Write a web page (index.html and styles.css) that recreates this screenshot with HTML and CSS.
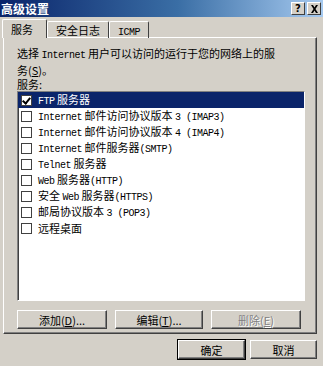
FILE: index.html
```html
<!DOCTYPE html>
<html lang="zh-CN">
<head>
  <meta charset="UTF-8" />
  <title>高级设置</title>
  <link rel="stylesheet" href="styles.css">
</head>
<body>
  <div class="janela">
    <div class="titulo">
      <span class="titulo-texto">高级设置</span>
      <div class="titulo-botoes">
        <span class="tb">?</span>
        <span class="tb">
          <svg width="9" height="8" viewBox="0 0 9 8"><path d="M1 0h2l1.5 2.5L6 0h2L5.5 4 8 8H6L4.5 5.5 3 8H1l2.5-4z" fill="#000"/></svg>
        </span>
      </div>
    </div>

    <div class="abas">
      <div class="aba ativa">服务</div>
      <div class="aba">安全日志</div>
      <div class="aba"><span class="en">ICMP</span></div>
    </div>

    <div class="painel">
      <p class="intro">选择 <span class="en">Internet</span> 用户可以访问的运行于您的网络上的服务(<u>S</u>)。</p>
      <p class="rotulo">服务:</p>

      <ul class="lista">
        <li class="sel"><span class="chk on"></span><span class="txt"><span class="en">FTP</span> 服务器</span></li>
        <li><span class="chk"></span><span class="txt"><span class="en">Internet</span> 邮件访问协议版本 <span class="en">3 (IMAP3)</span></span></li>
        <li><span class="chk"></span><span class="txt"><span class="en">Internet</span> 邮件访问协议版本 <span class="en">4 (IMAP4)</span></span></li>
        <li><span class="chk"></span><span class="txt"><span class="en">Internet</span> 邮件服务器<span class="en">(SMTP)</span></span></li>
        <li><span class="chk"></span><span class="txt"><span class="en">Telnet</span> 服务器</span></li>
        <li><span class="chk"></span><span class="txt"><span class="en">Web</span> 服务器<span class="en">(HTTP)</span></span></li>
        <li><span class="chk"></span><span class="txt">安全 <span class="en">Web</span> 服务器<span class="en">(HTTPS)</span></span></li>
        <li><span class="chk"></span><span class="txt">邮局协议版本 <span class="en">3 (POP3)</span></span></li>
        <li><span class="chk"></span><span class="txt">远程桌面</span></li>
      </ul>

      <div class="acoes">
        <button class="btn">添加(<u>D</u>)...</button>
        <button class="btn">编辑(<u>T</u>)...</button>
        <button class="btn off">删除(<u>E</u>)</button>
      </div>
    </div>

    <div class="rodape">
      <button class="btn padrao">确定</button>
      <button class="btn">取消</button>
    </div>
  </div>
</body>
</html>
```

FILE: styles.css
```css
body {
  margin: 0;
  background-color: #d4d0c8;
  font-family: "Noto Sans CJK SC", sans-serif;
  font-size: 11px;
  color: #000;
}

.janela {
  width: 323px;
  height: 366px;
  background-color: #d4d0c8;
  display: flex;
  flex-direction: column;
  overflow: hidden;
}

.en {
  font-family: "Liberation Mono", monospace;
  font-size: 10px;
  letter-spacing: -0.5px;
}

.titulo {
  height: 17px;
  flex-shrink: 0;
  background: linear-gradient(to right, #0a246a, #3a6ea5 55%, #a6caf0);
  display: flex;
  align-items: center;
  justify-content: space-between;
  padding: 0 2px 0 1px;
}

.titulo-texto {
  color: #fff;
  font-weight: bold;
  font-size: 12px;
  line-height: 15px;
}

.titulo-botoes {
  display: flex;
  gap: 2px;
}

.tb {
  width: 12px;
  height: 11px;
  background-color: #d4d0c8;
  border-top: 1px solid #fff;
  border-left: 1px solid #fff;
  border-right: 1px solid #404040;
  border-bottom: 1px solid #404040;
  display: flex;
  align-items: center;
  justify-content: center;
  font-family: "DejaVu Sans", sans-serif;
  font-weight: bold;
  font-size: 10px;
  line-height: 11px;
}

.abas {
  display: flex;
  align-items: flex-end;
  height: 19px;
  flex-shrink: 0;
  margin-top: 1px;
  padding-left: 2px;
}

.aba {
  height: 16px;
  padding: 0 8px;
  border-top: 1px solid #fff;
  border-left: 1px solid #fff;
  border-right: 1px solid #404040;
  border-radius: 2px 2px 0 0;
  line-height: 16px;
  position: relative;
  top: 1px;
}

.aba.ativa {
  height: 18px;
  width: 27px;
  line-height: 18px;
  z-index: 1;
  background-color: #d4d0c8;
}

.painel {
  margin: 0 6px 0 3px;
  height: 297px;
  flex-shrink: 0;
  box-sizing: border-box;
  border-top: 1px solid #fff;
  border-left: 1px solid #fff;
  border-right: 1px solid #404040;
  border-bottom: 1px solid #404040;
  box-shadow: inset -1px -1px 0 #808080;
  padding: 8px 0 0 13px;
}

.intro {
  margin: 0;
  width: 258px;
  line-height: 14px;
  word-break: break-all;
}

.rotulo {
  margin: 0;
  line-height: 14px;
}

.lista {
  list-style: none;
  margin: 0;
  padding: 0;
  width: 288px;
  height: 210px;
  box-sizing: border-box;
  background-color: #fff;
  border-top: 1px solid #808080;
  border-left: 1px solid #808080;
  border-right: 1px solid #fff;
  border-bottom: 1px solid #fff;
  box-shadow: inset 1px 1px 0 #404040;
}

.lista li {
  height: 16px;
  display: flex;
  align-items: center;
  padding-left: 3px;
  white-space: nowrap;
}

.lista li.sel {
  background-color: #0a246a;
  color: #fff;
}

.txt {
  line-height: 16px;
}

.chk {
  width: 9px;
  height: 9px;
  border: 1px solid #404040;
  background-color: #fff;
  margin-right: 6px;
  flex-shrink: 0;
  position: relative;
}

.chk.on::after {
  content: "";
  position: absolute;
  left: 2px;
  top: 0;
  width: 3px;
  height: 6px;
  border-right: 2px solid #000;
  border-bottom: 2px solid #000;
  transform: rotate(40deg);
}

.acoes {
  display: flex;
  gap: 8px;
  margin-top: 9px;
}

.btn {
  height: 19px;
  width: 90px;
  padding: 0;
  background-color: #d4d0c8;
  border-top: 1px solid #fff;
  border-left: 1px solid #fff;
  border-right: 1px solid #404040;
  border-bottom: 1px solid #404040;
  box-shadow: inset -1px -1px 0 #808080;
  font-family: "Noto Sans CJK SC", sans-serif;
  font-size: 11px;
  color: #000;
}

.acoes .btn:nth-child(2) {
  width: 88px;
}

.btn.off {
  color: #808080;
  text-shadow: 1px 1px 0 #fff;
}

.rodape {
  display: flex;
  justify-content: flex-end;
  gap: 5px;
  margin-top: 6px;
  padding-right: 6px;
}

.rodape .btn {
  width: 67px;
}

.btn.padrao {
  outline: 1px solid #000;
}
```
